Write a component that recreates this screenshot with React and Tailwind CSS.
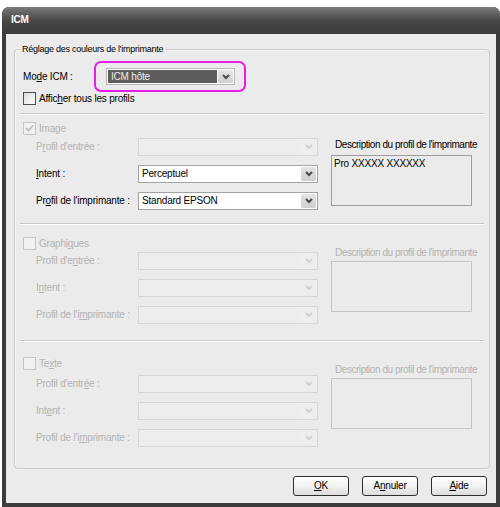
import React from 'react';

// small chevron used by the combo boxes
function Chevron({ color }) {
  return (
    <svg width="8" height="6" viewBox="0 0 8 6">
      <polyline points="1,1 4,4 7,1" fill="none" stroke={color} strokeWidth="2" />
    </svg>
  );
}

function Check({ checked, disabled }) {
  return (
    <span
      className={`w-[13px] h-[13px] shrink-0 flex items-center justify-center border ${
        disabled ? 'border-[#c6c6c6] bg-[#f1f1f1]' : 'border-[#4d4d4d] bg-gradient-to-br from-[#dcdcdc] to-white'
      }`}
    >
      {checked && (
        <svg width="9" height="9" viewBox="0 0 9 9">
          <polyline points="1,4 3.5,6.5 8,1.5" fill="none" stroke={disabled ? '#bdbdbd' : '#222'} strokeWidth="1.8" />
        </svg>
      )}
    </span>
  );
}

function Combo({ value, disabled, className = '' }) {
  return (
    <div
      className={`flex h-[18px] w-[180px] border ${
        disabled ? 'border-[#d6d6d6] bg-[#ededed]' : 'border-[#a3a3a3] bg-white'
      } ${className}`}
    >
      <div className="flex-1 pl-[3px] flex items-center text-black">{value}</div>
      <div
        className={`w-[15px] m-[1px] flex items-center justify-center rounded-[2px] ${
          disabled ? 'bg-[#eeeeee]' : 'bg-gradient-to-b from-[#e4e4e4] to-[#cfcfcf]'
        }`}
      >
        <Chevron color={disabled ? '#d2d2d2' : '#4a4a4a'} />
      </div>
    </div>
  );
}

function Separator({ className = '' }) {
  return <div className={`mx-[5px] h-[2px] border-t border-[#c9c9c9] border-b border-b-white ${className}`} />;
}

function Section({ title, checked, enabled, rows, rowsGap, descTop, descGap, descText }) {
  const tone = enabled ? 'text-black' : 'text-[#b3b3b3]';
  return (
    <div className="flex">
      <div className="w-[303px]">
        <div className="pl-[8px] flex items-center gap-[3px] h-[13px] text-[#b3b3b3]">
          <Check checked={checked} disabled />
          <span>{title}</span>
        </div>
        <div className={`flex flex-col gap-[9px] ${rowsGap}`}>
          {rows.map((r, i) => (
            <div key={i} className="flex items-center pl-[21px]">
              <span className={`w-[102px] ${r.active ? 'text-black' : 'text-[#b3b3b3]'}`}>{r.label}</span>
              <Combo value={r.value} disabled={!r.active} />
            </div>
          ))}
        </div>
      </div>
      <div className={`ml-[13px] w-[141px] ${descTop}`}>
        <div className={`pl-[4px] whitespace-nowrap tracking-[-0.45px] ${tone}`}>Description du profil de l'imprimante</div>
        <div className={`h-[51px] border ${enabled ? 'border-[#9c9c9c]' : 'border-[#c4c4c4]'} pl-[2px] pt-[2px] ${descGap}`}>
          {descText}
        </div>
      </div>
    </div>
  );
}

export default function App() {
  return (
    <div className="w-[500px] h-[507px] bg-white pt-[7px] pl-[2px] overflow-hidden font-['Liberation_Sans',Arial,sans-serif] text-[10px] leading-[12px] tracking-[-0.2px] text-black">
      <div className="w-[498px] h-[500px] flex flex-col rounded-t-[7px] bg-[#3d3d3d] px-[4px] pb-[4px]">
        <div className="h-[27px] -mx-[4px] rounded-t-[7px] bg-gradient-to-b from-[#7b7b7b] via-[#474747] to-[#3b3b3b] flex items-center pl-[9px] pb-[1px] text-white font-bold text-[10px]">
          ICM
        </div>

        <div className="flex-1 bg-[#ebebeb] flex flex-col">
          <div className="relative ml-[8px] mt-[15px] w-[476px] h-[420px] border border-[#cdcdcd] rounded-[4px] shadow-[inset_1px_1px_0_#f7f7f7]">
            <span className="absolute -top-[7px] left-[5px] px-[2px] bg-[#ebebeb] text-[9px] tracking-[-0.25px]">
              Réglage des couleurs de l'imprimante
            </span>

            <div className="mt-[18px] pl-[8px] flex items-center h-[17px]">
              <span className="w-[83px]">
                Mo<u>d</u>e ICM :
              </span>
              <div className="relative w-[129px] h-[17px] flex border border-[#b5b5b5] bg-white">
                <div className="flex-1 m-[1px] bg-[#5c5c5c] text-[#eeeeee] pl-[3px] flex items-center">ICM hôte</div>
                <div className="w-[15px] my-[1px] mr-[1px] flex items-center justify-center rounded-[2px] bg-gradient-to-b from-[#e6e6e6] to-[#cfcfcf]">
                  <Chevron color="#4a4a4a" />
                </div>
                <div className="absolute -left-[13px] -right-[12px] -top-[8px] -bottom-[8px] border-2 border-[#e61ee6] rounded-[7px]" />
              </div>
            </div>

            <div className="mt-[7px] pl-[8px] flex items-center gap-[3px] h-[13px]">
              <Check />
              <span>
                Affic<u>h</u>er tous les profils
              </span>
            </div>

            <Separator className="mt-[8px]" />

            <div className="mt-[7px]">
              <Section
                title="Image"
                checked
                enabled
                rowsGap="mt-[3px]"
                descTop="mt-[17px]"
                descGap="mt-[4px]"
                descText="Pro XXXXX XXXXXX"
                rows={[
                  { label: <>P<u>r</u>ofil d'entrée :</>, value: '', active: false },
                  { label: <><u>I</u>ntent :</>, value: 'Perceptuel', active: true },
                  { label: <>Pr<u>o</u>fil de l'imprimante :</>, value: 'Standard EPSON', active: true },
                ]}
              />
            </div>

            <Separator className="mt-[13px]" />

            <div className="mt-[12px]">
              <Section
                title={<>Graphi<u>q</u>ues</>}
                rowsGap="mt-[2px]"
                descTop="mt-[10px]"
                descGap="mt-[2px]"
                rows={[
                  { label: <>Profil d'e<u>n</u>trée :</>, value: '' },
                  { label: <>I<u>n</u>tent :</>, value: '' },
                  { label: <>Profil de l'i<u>m</u>primante :</>, value: '' },
                ]}
              />
            </div>

            <Separator className="mt-[16px]" />

            <div className="mt-[15px]">
              <Section
                title={<>Te<u>x</u>te</>}
                rowsGap="mt-[5px]"
                descTop="mt-[7px]"
                descGap="mt-[2px]"
                rows={[
                  { label: <>Profil d'entr<u>é</u>e :</>, value: '' },
                  { label: <>Int<u>e</u>nt :</>, value: '' },
                  { label: <>Profil de l'i<u>m</u>primante :</>, value: '' },
                ]}
              />
            </div>
          </div>

          <div className="mt-[7px] pr-[9px] flex justify-end gap-[13px]">
            {[<><u>O</u>K</>, <>A<u>n</u>nuler</>, <><u>A</u>ide</>].map((t, i) => (
              <button
                key={i}
                className="w-[56px] h-[20px] rounded-[3px] border border-[#2e2e2e] bg-gradient-to-b from-white via-[#f2f2f2] to-[#dcdcdc] text-[10px] leading-[12px] text-black flex items-center justify-center"
              >
                <span>{t}</span>
              </button>
            ))}
          </div>
        </div>
      </div>
    </div>
  );
}
